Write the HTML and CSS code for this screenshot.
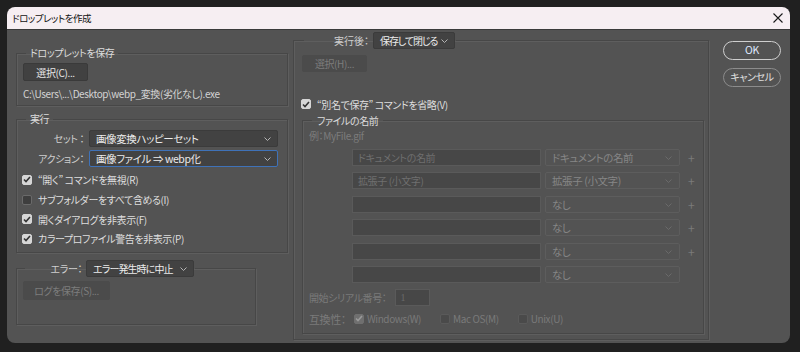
FILE: index.html
```html
<!DOCTYPE html>
<html lang="ja">
<head>
    <meta charset="UTF-8">
    <title>ドロップレットを作成</title>
    <link rel="stylesheet" href="styles.css">
</head>
<body>

<div class="window">
    <div class="titlebar">
        <span class="title">ドロップレットを作成</span>
        <svg class="close" width="10" height="10" viewBox="0 0 10 10"><path d="M0.5 0.5 L9.5 9.5 M9.5 0.5 L0.5 9.5" stroke="#1a1a1a" stroke-width="1.1"/></svg>
    </div>

    <div class="dialog">
        <!-- левая колонка -->
        <div class="col-left">
            <fieldset class="group g-save">
                <legend>ドロップレットを保存</legend>
                <div class="btn">選択(C)...</div>
                <div class="path">C:\Users\...\Desktop\webp_変換(劣化なし).exe</div>
            </fieldset>

            <fieldset class="group g-play">
                <legend>実行</legend>
                <div class="field">
                    <span class="label">セット ：</span>
                    <div class="select">画像変換ハッピーセット<svg class="chev" width="7" height="4" viewBox="0 0 7 4"><path d="M0.5 0.5 L3.5 3.5 L6.5 0.5" fill="none" stroke="#b4b4b4"/></svg></div>
                </div>
                <div class="field">
                    <span class="label">アクション：</span>
                    <div class="select focus">画像ファイル ⇒ webp化<svg class="chev" width="7" height="4" viewBox="0 0 7 4"><path d="M0.5 0.5 L3.5 3.5 L6.5 0.5" fill="none" stroke="#b4b4b4"/></svg></div>
                </div>
                <div class="check"><span class="box on"><svg width="8" height="7" viewBox="0 0 8 7"><path d="M1 3.5 L3 5.5 L7 1" fill="none" stroke="#333" stroke-width="1.6"/></svg></span>“開く” コマンドを無視(R)</div>
                <div class="check"><span class="box"></span>サブフォルダーをすべて含める(I)</div>
                <div class="check"><span class="box on"><svg width="8" height="7" viewBox="0 0 8 7"><path d="M1 3.5 L3 5.5 L7 1" fill="none" stroke="#333" stroke-width="1.6"/></svg></span>開くダイアログを非表示(F)</div>
                <div class="check"><span class="box on"><svg width="8" height="7" viewBox="0 0 8 7"><path d="M1 3.5 L3 5.5 L7 1" fill="none" stroke="#333" stroke-width="1.6"/></svg></span>カラープロファイル警告を非表示(P)</div>
            </fieldset>

            <fieldset class="group g-error">
                <legend>
                    <span class="label">エラー：</span>
                    <div class="select">エラー発生時に中止<svg class="chev" width="7" height="4" viewBox="0 0 7 4"><path d="M0.5 0.5 L3.5 3.5 L6.5 0.5" fill="none" stroke="#b4b4b4"/></svg></div>
                </legend>
                <div class="btn disabled log">ログを保存(S)...</div>
            </fieldset>
        </div>

        <!-- средняя колонка -->
        <fieldset class="group g-after">
            <legend>
                <span class="label">実行後：</span>
                <div class="select">保存して閉じる<svg class="chev" width="7" height="4" viewBox="0 0 7 4"><path d="M0.5 0.5 L3.5 3.5 L6.5 0.5" fill="none" stroke="#b4b4b4"/></svg></div>
            </legend>
            <div class="btn disabled pick">選択(H)...</div>
            <div class="check skip"><span class="box on"><svg width="8" height="7" viewBox="0 0 8 7"><path d="M1 3.5 L3 5.5 L7 1" fill="none" stroke="#333" stroke-width="1.6"/></svg></span>“別名で保存” コマンドを省略(V)</div>

            <fieldset class="group g-name">
                <legend>ファイルの名前</legend>
                <div class="example">例：MyFile.gif</div>
                <div class="rows" id="rows"></div>
                <div class="serial">
                    <span>開始シリアル番号：</span>
                    <div class="num">1</div>
                </div>
                <div class="compat">
                    <span class="compat-label">互換性：</span>
                    <span class="box dis on"><svg width="8" height="7" viewBox="0 0 8 7"><path d="M1 3.5 L3 5.5 L7 1" fill="none" stroke="#9a9a9a" stroke-width="1.6"/></svg></span><span class="opt">Windows(W)</span>
                    <span class="box dis"></span><span class="opt">Mac OS(M)</span>
                    <span class="box dis"></span><span class="opt">Unix(U)</span>
                </div>
            </fieldset>
        </fieldset>

        <!-- кнопки -->
        <div class="col-right">
            <div class="pill ok">OK</div>
            <div class="pill">キャンセル</div>
        </div>
    </div>
</div>

<script>
    // Строки для имени файла
    const rows = [
        { text: 'ドキュメントの名前', value: 'ドキュメントの名前', plus: true },
        { text: '拡張子 (小文字)', value: '拡張子 (小文字)', plus: true },
        { text: '', value: 'なし', plus: true },
        { text: '', value: 'なし', plus: true },
        { text: '', value: 'なし', plus: true },
        { text: '', value: 'なし', plus: false }
    ];

    const rowsBox = document.getElementById('rows');
    rows.forEach(row => {
        const item = document.createElement('div');
        item.classList.add('name-row');
        item.innerHTML = `
            <div class="txt">${row.text}</div>
            <div class="sel">${row.value}<svg class="chev" width="7" height="4" viewBox="0 0 7 4"><path d="M0.5 0.5 L3.5 3.5 L6.5 0.5" fill="none" stroke="#6a6a6a"/></svg></div>
            <span class="plus">${row.plus ? '+' : ''}</span>
        `;
        rowsBox.appendChild(item);
    });
</script>

</body>
</html>
```

FILE: styles.css
```css
* {
    box-sizing: border-box;
}

body {
    margin: 0;
    background: #202020;
    font-family: "Noto Sans CJK JP", "Noto Sans", sans-serif;
    font-size: 10px;
    letter-spacing: -0.4px;
    font-feature-settings: "palt";
    color: #dedede;
    white-space: nowrap;
}

.window {
    margin: 7px 0 0 7px;
    width: 783px;
    height: 336px;
    border-radius: 8px;
    overflow: hidden;
}

.titlebar {
    height: 23px;
    background: #f6eef2;
    border-bottom: 1px solid #3a3a3a;
    display: flex;
    align-items: center;
    justify-content: space-between;
    padding: 0 8px 0 5px;
    color: #111;
    font-size: 9.5px;
    letter-spacing: -0.5px;
}

.close {
    margin-right: -1px;
}

.dialog {
    height: 313px;
    background: #535353;
    display: flex;
    align-items: flex-start;
    padding: 2px 0 0 9px;
}

/* группы */
.group {
    margin: 0;
    border: 1px solid #474747;
    box-shadow: 1px 1px 0 #5e5e5e, inset 1px 1px 0 #5e5e5e;
    min-width: 0;
}

.group > legend {
    line-height: 16px;
    padding: 0 4px;
    color: #dcdcdc;
}

.col-left {
    width: 272px;
    margin-top: 13px;
}

.g-save {
    padding: 2px 6px 3px 6px;
}

.g-save > legend {
    margin-left: 3px;
}

.btn {
    width: 65px;
    height: 18px;
    line-height: 17px;
    text-align: center;
    background: #414141;
    border: 1px solid #3a3a3a;
    border-radius: 2px;
    color: #e6e6e6;
}

.btn.disabled {
    background: #4b4b4b;
    border-color: #4b4b4b;
    color: #7d7d7d;
}

.path {
    margin-top: 5px;
    line-height: 16px;
    color: #d4d4d4;
}

.g-play {
    margin-top: 5px;
    padding: 3px 9px 3px 6px;
}

.g-play > legend {
    margin-left: 3px;
}

.field {
    display: flex;
    align-items: center;
    margin-bottom: 3px;
}

.label {
    width: 61px;
    text-align: right;
    margin-right: 5px;
    color: #cfcfcf;
}

.select {
    position: relative;
    flex: 1;
    height: 17px;
    line-height: 15px;
    padding-left: 6px;
    background: #424242;
    border: 1px solid #3b3b3b;
    border-radius: 2px;
    color: #ececec;
    font-size: 10.5px;
}

.select.focus {
    border-color: #3f72b8;
}

.chev {
    position: absolute;
    right: 6px;
    top: 6px;
}

.check {
    display: flex;
    align-items: center;
    height: 19.7px;
    margin-left: -1px;
    color: #dedede;
}

.box {
    width: 10px;
    height: 10px;
    border-radius: 2px;
    margin-right: 6px;
    background: #3e3e3e;
    border: 1px solid #6a6a6a;
    display: inline-flex;
    align-items: center;
    justify-content: center;
    flex-shrink: 0;
}

.box.on {
    background: #d6d6d6;
    border-color: #d6d6d6;
}

.box.dis {
    background: #4a4a4a;
    border-color: #5a5a5a;
}

.box.dis.on {
    background: #6f6f6f;
    border-color: #6f6f6f;
}

.g-error {
    width: 240px;
    margin-top: 7px;
    height: 65px;
    padding: 4px 6px 3px 6px;
}

.g-error > legend {
    display: flex;
    align-items: center;
    margin-left: 2px;
    padding: 0 1px 0 0;
    line-height: 17px;
}

.g-error .label {
    width: 57px;
    margin-right: 4px;
}

.g-error .select {
    width: 108px;
    flex: none;
    font-size: 10px;
    letter-spacing: -0.9px;
}

.btn.log {
    width: 87px;
    height: 19px;
    line-height: 18px;
}

/* средняя колонка */
.g-after {
    width: 416px;
    margin-left: 5px;
    height: 308px;
    padding: 6px 4px 6px 8px;
}

.g-after > legend {
    display: flex;
    align-items: center;
    margin-left: 2px;
    padding: 0 1px 0 0;
    line-height: 17px;
}

.g-after .label {
    width: 65px;
    margin-right: 4px;
    letter-spacing: 0;
}

.g-after .select {
    width: 82px;
    flex: none;
    font-size: 10px;
    letter-spacing: -1.1px;
}

.btn.pick {
    width: 65px;
    height: 17px;
    line-height: 15px;
}

.check.skip {
    margin-top: 23px;
    height: 18px;
}

.g-name {
    padding: 0 6px 5px 6px;
}

.g-name > legend {
    margin-left: 3px;
    padding: 0 5px;
    line-height: 15px;
}

.example {
    line-height: 16px;
    color: #7c7c7c;
}

.rows {
    margin-top: 5px;
}

.name-row {
    display: flex;
    align-items: center;
    height: 17px;
    margin-bottom: 6.4px;
    padding-left: 43px;
}

.txt {
    width: 189px;
    height: 17px;
    line-height: 15px;
    padding-left: 5px;
    background: #474747;
    border: 1px solid #5a5a5a;
    color: #6f6f6f;
}

.sel {
    position: relative;
    width: 135px;
    height: 17px;
    margin-left: 4px;
    line-height: 15px;
    padding-left: 6px;
    border: 1px solid #5d5d5d;
    border-radius: 2px;
    color: #868686;
    font-size: 10.5px;
}

.sel .chev {
    right: 7px;
}

.plus {
    margin-left: 8px;
    color: #7a7a7a;
    font-size: 12px;
}

.serial {
    display: flex;
    align-items: center;
    margin-top: -0.4px;
    height: 17px;
    color: #7a7a7a;
}

.num {
    width: 35px;
    height: 17px;
    margin-left: 9px;
    line-height: 15px;
    padding-left: 4px;
    background: #474747;
    border: 1px solid #5a5a5a;
    color: #6a6a6a;
    font-family: "Liberation Serif", serif;
}

.compat {
    display: flex;
    align-items: center;
    margin-top: 4px;
    height: 18px;
    color: #7a7a7a;
}

.compat-label {
    margin-right: 8px;
    font-size: 11px;
}

.compat .box {
    margin-right: 3px;
}

.opt {
    margin-right: 19px;
}

/* кнопки справа */
.col-right {
    margin-left: 14px;
    margin-top: 9px;
}

.pill {
    width: 58px;
    height: 19px;
    line-height: 16px;
    text-align: center;
    border: 1.5px solid #8c8c8c;
    border-radius: 10px;
    margin-bottom: 8px;
    color: #e0e0e0;
}

.pill.ok {
    border-color: #cfcfcf;
    color: #dfe8ff;
    font-size: 10.5px;
}
```
